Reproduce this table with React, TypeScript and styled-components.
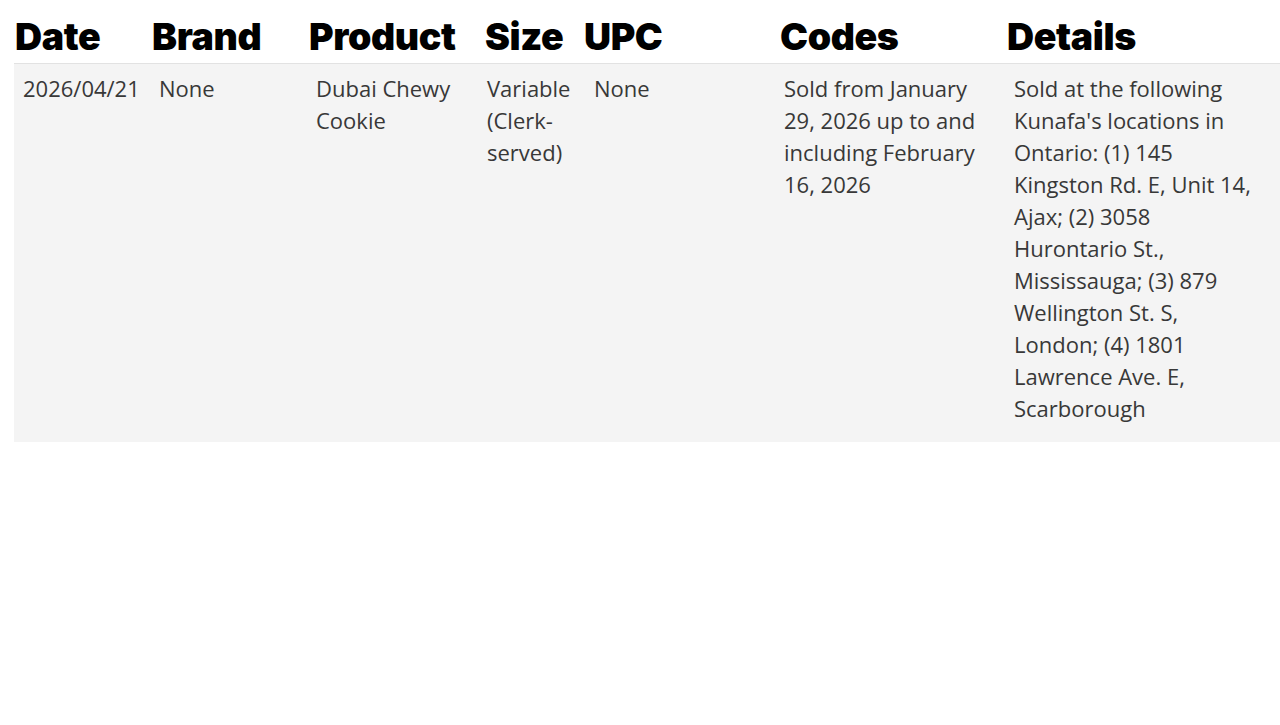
import styled, { createGlobalStyle } from "styled-components";

const GlobalStyle = createGlobalStyle`
  body {
    margin: 0;
    background: #ffffff;
  }
`;

const headerColumns = "137px 157px 176px 99px 196px 227px 1fr";
const bodyColumns = "136px 157px 171px 107px 190px 230px 1fr";

const Table = styled.div`
  margin-left: 14px;
  width: 1266px;
  display: flex;
  flex-direction: column;
`;

const HeaderRow = styled.div`
  display: grid;
  grid-template-columns: ${headerColumns};
  height: 63px;
  padding-left: 1px;
  align-items: end;
  border-bottom: 1px solid #e2e2e2;
`;

const HeaderCell = styled.div`
  font-family: Inter, "Liberation Sans", sans-serif;
  font-weight: 900;
  font-size: 37.5px;
  line-height: 1;
  letter-spacing: -0.4px;
  color: #000000;
  padding-bottom: 8px;
  white-space: nowrap;
`;

const BodyRow = styled.div`
  display: grid;
  grid-template-columns: ${bodyColumns};
  background: #f4f4f4;
  padding: 8px 9px 18px;
`;

const BodyCell = styled.div`
  font-family: "Open Sans", "Noto Sans", sans-serif;
  font-size: 22px;
  line-height: 32px;
  color: #383838;
  padding-right: 18px;

  &:last-child {
    padding-right: 8px;
  }
`;

const headers = ["Date", "Brand", "Product", "Size", "UPC", "Codes", "Details"];

const row = [
  "2026/04/21",
  "None",
  "Dubai Chewy Cookie",
  "Variable (Clerk-served)",
  "None",
  "Sold from January 29, 2026 up to and including February 16, 2026",
  "Sold at the following Kunafa's locations in Ontario: (1) 145 Kingston Rd. E, Unit 14, Ajax; (2) 3058 Hurontario St., Mississauga; (3) 879 Wellington St. S, London; (4) 1801 Lawrence Ave. E, Scarborough",
];

const App: React.FC = () => {
  return (
    <>
      <GlobalStyle />
      <Table>
        <HeaderRow>
          {headers.map((h) => (
            <HeaderCell key={h}>{h}</HeaderCell>
          ))}
        </HeaderRow>
        <BodyRow>
          {row.map((text, i) => (
            <BodyCell key={i}>{text}</BodyCell>
          ))}
        </BodyRow>
      </Table>
    </>
  );
};

export default App;
